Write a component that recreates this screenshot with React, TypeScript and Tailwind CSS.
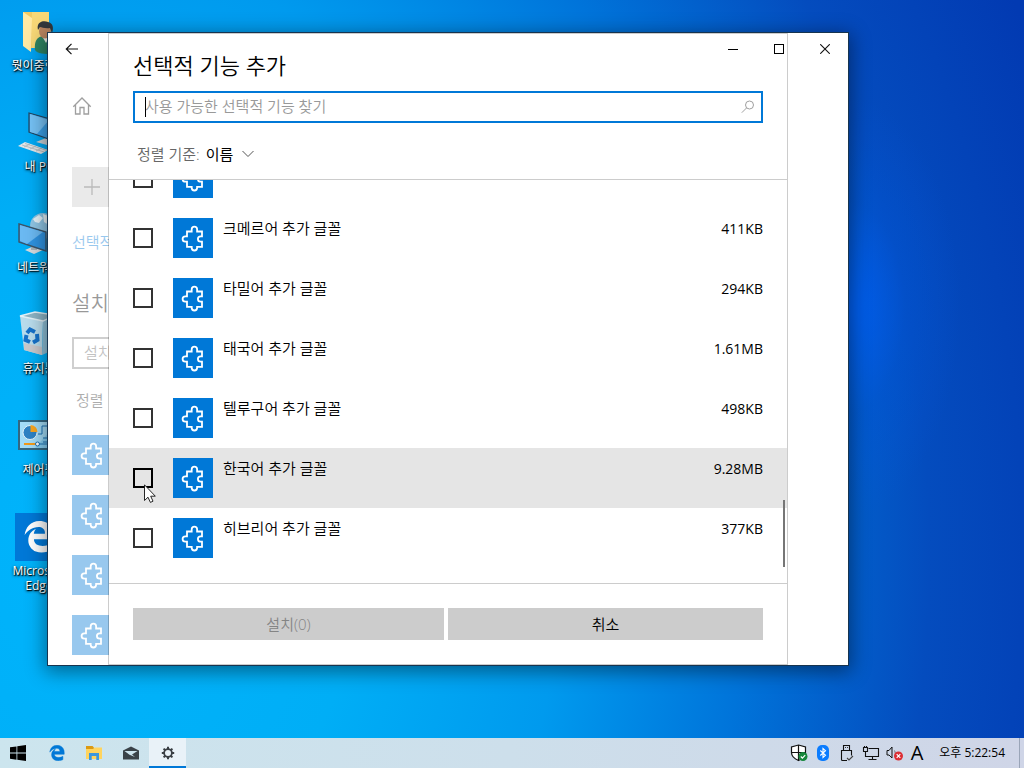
import React from 'react';

const EDGE_PATH =
  'M25.714 228.163c.111-.162.23-.323.342-.485-.021.162-.045.323-.065.485h-.277zm460.572 15.508c0-44.032-7.754-84.465-28.801-122.405C416.498 47.879 343.912 8.001 258.893 8.001 118.962 7.724 40.617 113.214 26.056 227.679c42.429-61.312 117.073-121.376 220.375-124.966 0 0 109.666 0 99.419 104.957H169.997c6.369-37.386 18.554-58.986 34.339-78.926-75.048 34.893-121.85 96.096-120.742 188.315.83 71.448 50.124 144.836 120.743 171.976 83.357 31.843 192.776 7.2 240.132-21.323V363.307c-80.864 56.494-270.871 60.925-272.255-67.572h314.073v-52.064z';

type Feature = { id: string; name: string; size: string; hovered?: boolean };

const features: Feature[] = [
  { id: 'partial', name: '', size: '' },
  { id: 'khmer', name: '크메르어 추가 글꼴', size: '411KB' },
  { id: 'tamil', name: '타밀어 추가 글꼴', size: '294KB' },
  { id: 'thai', name: '태국어 추가 글꼴', size: '1.61MB' },
  { id: 'telugu', name: '텔루구어 추가 글꼴', size: '498KB' },
  { id: 'korean', name: '한국어 추가 글꼴', size: '9.28MB', hovered: true },
  { id: 'hebrew', name: '히브리어 추가 글꼴', size: '377KB' },
];

function PuzzleTile() {
  return (
    <svg viewBox="0 0 40 40" className="size-10 shrink-0 bg-[#0078d7]" aria-hidden="true">
      <path
        d="M14 13.5H18.7V11.3a2.7 2.7 0 0 1 5.4 0V13.5H29V18.3H27.6a2.7 2.7 0 0 0 0 5.4H29V28.8H24.1V29.8a2.7 2.7 0 0 1-5.4 0V28.8H14V23.7H12.3a2.7 2.7 0 0 1 0-5.4H14Z"
        fill="none"
        stroke="#fff"
        strokeWidth="1.8"
      />
    </svg>
  );
}

function FolderIcon() {
  return (
    <svg viewBox="0 0 48 48" className="size-12" aria-hidden="true">
      <path d="M8 4H34V40H12Z" fill="#f2ca63" />
      <path d="M17 4H34V40H17Z" fill="#f8d877" />
      <path d="M8 4 17 10 16 44 8 38Z" fill="#ffe9a4" />
      <path d="M20 42C19 33 22 29 28 28L38 29V46C30 46 22 46 20 42Z" fill="#2f8463" />
      <path d="M27 28 31 35 35 28Z" fill="#e8efe9" />
      <ellipse cx="30" cy="23" rx="6" ry="7.5" fill="#b98560" />
      <path d="M23 22C21 14 28 12 33 14 38 15 39 20 37 25L35 20C30 21 27 19 25 19Z" fill="#33383c" />
    </svg>
  );
}

function ComputerIcon() {
  return (
    <svg viewBox="0 0 48 48" className="size-12" aria-hidden="true">
      <path d="M21 33 31 29 40 34 32 36Z" fill="#c9d0d5" />
      <path d="M14 4 42 12V33L14 23Z" fill="#3a9fe6" stroke="#24455f" strokeWidth="1.2" />
      <path d="M15 5 34 11 22 25 15 23Z" fill="#75c1f4" />
      <path d="M3 37 10 33 33 41 26 45Z" fill="#e3e6e8" />
      <path d="M7 36 29 43M10 34.500 32 41.500M9 38 15 35M15 40 21 37M21 42 27 39" stroke="#a9b2b8" strokeWidth=".8" />
    </svg>
  );
}

function NetworkIcon() {
  return (
    <svg viewBox="0 0 48 48" className="size-12" aria-hidden="true">
      <circle cx="28" cy="16" r="13" fill="#8fc5e4" />
      <path d="M18 9 24 5 28 8 24 13 20 12ZM28 4 36 7 34 15 29 12Z" fill="#e6f2f8" />
      <path d="M10 40 19 36 28 40 19 44Z" fill="#d5dade" />
      <path d="M16 34H22V40H16Z" fill="#a7b1b8" />
      <path d="M4 14 31 22V41L4 32Z" fill="#2f92e0" stroke="#3c5468" strokeWidth="1.4" />
      <path d="M5 15 28 22 12 34 5 31Z" fill="#6bb9f2" />
    </svg>
  );
}

function RecycleBinIcon() {
  return (
    <svg viewBox="0 0 48 48" className="size-12" aria-hidden="true">
      <path d="M5 5 28 10 27 44 9 39Z" fill="#b9dcec" />
      <path d="M28 10 40 4 36 40 27 44Z" fill="#8fc0d8" />
      <path d="M9 32 27 36V44L9 39Z" fill="#c9c8cb" />
      <path d="M5 5 20 1 40 4 28 10Z" fill="#8db4c5" stroke="#e3f1f7" strokeWidth="1.3" />
      <g fill="none" stroke="#1671c9" strokeWidth="4">
        <path d="M12 22 15 18.500 20 21" />
        <path d="M22 23 22.500 29 18 31.500" />
        <path d="M15 31 10.500 29 11.500 24" />
      </g>
    </svg>
  );
}

function ControlPanelIcon() {
  return (
    <svg viewBox="0 0 48 48" className="size-12" aria-hidden="true">
      <path d="M4 9H44V37H4Z" fill="#86cff3" stroke="#336782" strokeWidth="2" />
      <path d="M5 10H43L20 36H5Z" fill="#a3dcf7" />
      <circle cx="15" cy="20.500" r="7" fill="#2d82c4" stroke="#e5f4fb" />
      <path d="M15.500 20V13A7 7 0 0 1 22.500 20Z" fill="#f8a51f" />
      <path d="M23 22H27V14H32M28 26H34M28 30H34" stroke="#1b72b5" fill="none" />
      <path d="M9 32H21" stroke="#f19a19" strokeWidth="2" />
      <path d="M21 32H38" stroke="#1b72b5" />
      <circle cx="22.500" cy="32" r="2" fill="#fff" stroke="#1b72b5" />
    </svg>
  );
}

function EdgeTileIcon() {
  return (
    <svg viewBox="0 0 48 48" className="size-12 bg-[#0078d7]" aria-hidden="true">
      <path d={EDGE_PATH} fill="#fff" transform="translate(8 7.500) scale(.0635)" />
    </svg>
  );
}

const shortcuts = [
  { label: '뭣이중헌디', icon: <FolderIcon /> },
  { label: '내 PC', icon: <ComputerIcon /> },
  { label: '네트워크', icon: <NetworkIcon /> },
  { label: '휴지통', icon: <RecycleBinIcon /> },
  { label: '제어판', icon: <ControlPanelIcon /> },
  { label: 'Microsoft Edge', icon: <EdgeTileIcon /> },
];

function FeatureRow({ feature }: { feature: Feature }) {
  const box = feature.hovered ? 'border-black' : 'border-[#333333]';
  return (
    <li className={`flex shrink-0 items-start px-6 py-2.5 ${feature.hovered ? 'bg-[#e5e5e5]' : ''}`}>
      <div className="relative mt-2.5 mr-5 size-5 shrink-0">
        <input
          type="checkbox"
          id={feature.id}
          aria-label={feature.name || '추가 글꼴'}
          className={`block size-5 appearance-none border-2 ${box}`}
        />
        {feature.hovered && (
          <svg viewBox="0 0 12 19" className="pointer-events-none absolute top-4 left-[11px] z-10 h-[19px] w-3" aria-hidden="true">
            <path
              d="M.5 .8V16.500L4 13.200 6.400 18.400 9 17.200 6.700 12.200H11.300Z"
              fill="#fff"
              stroke="#111"
              strokeWidth=".9"
            />
          </svg>
        )}
      </div>
      <PuzzleTile />
      <label htmlFor={feature.id} className="ml-2.5 flex-1 text-[15px] leading-5">
        {feature.name}
      </label>
      <span className="text-sm leading-[22px] font-normal">{feature.size}</span>
    </li>
  );
}

function AddFeatureDialog() {
  return (
    <section
      role="dialog"
      aria-labelledby="dialog-title"
      className="absolute inset-y-0 right-15 left-15 flex flex-col border border-black/20 bg-white bg-clip-padding"
    >
      <header className="border-b border-[#cccccc] px-6 pt-[15px]">
        <h1 id="dialog-title" className="mb-2.5 text-[22px] leading-8">
          선택적 기능 추가
        </h1>
        <div className="relative flex h-8 items-center border-2 border-[#0078d7] pr-1.5 pl-2.5">
          <input
            type="text"
            aria-label="사용 가능한 선택적 기능 찾기"
            placeholder="사용 가능한 선택적 기능 찾기"
            className="min-w-0 flex-1 pb-0.5 text-[15px] outline-none placeholder:text-[#999999]"
          />
          <span className="absolute inset-y-1 left-2.5 w-px bg-black" />
          <svg viewBox="0 0 14 14" className="size-3.5" fill="none" stroke="#a0a0a0" aria-hidden="true">
            <circle cx="8.500" cy="5" r="4" />
            <path d="M5.600 7.900 .8 12.700" />
          </svg>
        </div>
        <div className="flex h-14 items-center gap-1.5 pt-1.5 pl-1 text-[15px]">
          <label htmlFor="sort" className="text-[#666666]">
            정렬 기준:
          </label>
          <span className="flex items-center gap-2">
            <select id="sort" className="appearance-none bg-transparent font-normal">
              <option>이름</option>
            </select>
            <svg viewBox="0 0 12 8" className="h-2 w-3" fill="none" stroke="#555" aria-hidden="true">
              <path d="M.5 1 6 6.500 11.500 1" />
            </svg>
          </span>
        </div>
      </header>
      <div className="relative flex min-h-0 flex-1 flex-col">
        <ul className="flex min-h-0 flex-1 flex-col justify-end overflow-hidden pb-[15px]">
          {features.map((f) => (
            <FeatureRow key={f.id} feature={f} />
          ))}
        </ul>
        <span className="absolute right-0.5 bottom-4 h-[67px] w-0.5 bg-[#767676]" />
      </div>
      <footer className="flex gap-1 border-t border-[#cccccc] p-6 text-[15px]">
        <button disabled className="h-8 flex-[311_1_0%] bg-[#cccccc] text-[#848484]">
          설치(0)
        </button>
        <button className="h-8 flex-[315_1_0%] bg-[#cccccc]">취소</button>
      </footer>
    </section>
  );
}

function SettingsWindow() {
  return (
    <div className="absolute top-8 right-[175px] bottom-[72px] left-[47px] border border-[#17344f] bg-white font-[350] shadow-[0_4px_18px_2px_rgba(0,0,0,0.42)]">
      <div className="relative z-10 flex h-8">
        <button aria-label="뒤로" className="grid w-12 place-items-center">
          <svg viewBox="0 0 14 12" className="h-3 w-3.5" fill="none" stroke="#111" strokeWidth="1.2" aria-hidden="true">
            <path d="M6.500 .8 1.300 6 6.500 11.200M1.300 6H13" />
          </svg>
        </button>
        <span className="flex-1" />
        <button aria-label="최소화" className="grid w-[46px] place-items-center">
          <span className="h-px w-2.5 bg-black" />
        </button>
        <button aria-label="최대화" className="grid w-[46px] place-items-center">
          <span className="size-2.5 border border-black" />
        </button>
        <button aria-label="닫기" className="grid w-[46px] place-items-center">
          <svg viewBox="0 0 10 10" className="size-2.5" stroke="#111" strokeWidth="1.1" aria-hidden="true">
            <path d="M.2 .2 9.800 9.800M9.800 .2 .2 9.800" />
          </svg>
        </button>
      </div>
      <div className="absolute inset-0 overflow-hidden pt-8">
        <div className="flex w-40 flex-col pl-6 opacity-40">
          <a href="#home" aria-label="홈" className="flex h-[82px] items-center">
            <svg viewBox="0 0 20 20" className="size-5" fill="none" stroke="#111" strokeWidth="1.3" aria-hidden="true">
              <path d="M1.300 10.700 10 2 18.700 10.700M3.500 9V18H8V11.500H12V18H16.500V9" />
            </svg>
          </a>
          <button aria-label="기능 추가" className="mt-5 grid size-10 place-items-center self-start bg-[#cccccc]">
            <svg viewBox="0 0 16 16" className="size-4" stroke="#555" strokeWidth="1.3" aria-hidden="true">
              <path d="M8 0V16M0 8H16" />
            </svg>
          </button>
          <a href="#history" className="flex h-[70px] items-center text-[15px] text-[#0078d7]">
            선택적
          </a>
          <h2 className="flex h-[54px] items-center text-xl">설치</h2>
          <input
            type="text"
            aria-label="설치"
            placeholder="설치"
            className="mt-1.5 h-8 border-2 border-[#888888] px-2.5 pb-0.5 text-[15px] placeholder:text-[#666666]"
          />
          <p className="flex h-[62px] items-center pl-1 text-[15px] text-[#333333]">정렬</p>
          <div className="mt-1 flex flex-col gap-5">
            <PuzzleTile />
            <PuzzleTile />
            <PuzzleTile />
            <PuzzleTile />
          </div>
        </div>
      </div>
      <AddFeatureDialog />
    </div>
  );
}

function Taskbar() {
  return (
    <footer className="flex h-[30px] items-stretch bg-linear-to-r from-[#cce5ee] via-[#cddfeb] to-[#cfd5e7]">
      <button aria-label="시작" className="mr-0.5 grid w-9 place-items-center">
        <svg viewBox="0 0 16 16" className="size-4" aria-hidden="true">
          <path d="M0 2.300 6.500 1.400V7.600H0zM7.300 1.300 16 0V7.600H7.300zM0 8.400H6.500V14.700L0 13.700zM7.300 8.400H16V16L7.300 14.800z" />
        </svg>
      </button>
      <button aria-label="Edge" className="grid w-[37px] place-items-center">
        <svg viewBox="0 0 512 512" className="size-4" aria-hidden="true">
          <path d={EDGE_PATH} fill="#0078d7" stroke="#0078d7" strokeWidth="16" />
        </svg>
      </button>
      <button aria-label="파일 탐색기" className="grid w-[37px] place-items-center">
        <svg viewBox="0 0 16 14" className="h-3.5 w-4" aria-hidden="true">
          <path d="M0 0H6.500L8 1.500V4H0Z" fill="#dc9a12" />
          <path d="M0 3H7L8.500 1.500H16V13H0Z" fill="#ffd45e" />
          <path d="M3 7H13V14H10.300V10H5.700V14H3Z" fill="#3c97dd" />
        </svg>
      </button>
      <button aria-label="메일" className="grid w-[37px] place-items-center">
        <svg viewBox="0 0 16 14" className="h-3.5 w-4" aria-hidden="true">
          <path d="M0 4.500 8 .5 16 4.500V13.500H0Z" fill="#3a4248" />
          <path d="M1.500 5H14.500L9 8.500 12 11 6.500 8.700Z" fill="#cde3ed" />
        </svg>
      </button>
      <button aria-label="설정" className="grid w-[37px] place-items-center border-b-2 border-[#0078d7] bg-[#e9f2f8] pt-0.5">
        <svg viewBox="0 0 14 14" className="size-3.5" fill="none" stroke="#3a3f44" aria-hidden="true">
          <circle cx="7" cy="7" r="3.900" strokeWidth="1.800" />
          <path
            d="M7 .8V3M7 11V13.200M.8 7H3M11 7H13.200M2.600 2.600 4.200 4.200M9.800 9.800 11.400 11.400M2.600 11.400 4.200 9.800M9.800 4.200 11.400 2.600"
            strokeWidth="2"
          />
        </svg>
      </button>
      <span className="flex-1" />
      <button aria-label="Windows 보안" className="grid w-6 place-items-center">
        <svg viewBox="0 0 18 18" className="size-[18px]" aria-hidden="true">
          <path d="M8.500 1 15.500 3V8.500C15.500 12.500 12 15 8.500 16.500 5 15 1.500 12.500 1.500 8.500V3Z" fill="#fff" stroke="#111" strokeWidth="1.200" />
          <path d="M8.500 1V16.500M1.500 8.500H15.500" stroke="#111" strokeWidth="1.200" />
          <circle cx="13" cy="12.500" r="4.500" fill="#16873c" />
          <path d="M10.800 12.500 12.400 14.100 15.200 11.200" stroke="#fff" strokeWidth="1.200" fill="none" />
        </svg>
      </button>
      <button aria-label="Bluetooth" className="grid w-6 place-items-center">
        <svg viewBox="0 0 12 16" className="h-4 w-3" aria-hidden="true">
          <rect width="12" height="16" rx="5" fill="#0a7cff" />
          <path d="M3.300 5.500 8.500 10.300 6 12.500V3.500L8.500 5.700 3.300 10.500" fill="none" stroke="#fff" strokeWidth="1.100" />
        </svg>
      </button>
      <button aria-label="하드웨어 안전하게 제거" className="grid w-6 place-items-center">
        <svg viewBox="0 0 14 18" className="h-[18px] w-3.5" fill="none" stroke="#111" strokeWidth="1.100" aria-hidden="true">
          <path d="M3.500 6V1.500H9.500V6M7 16.500H2.500Q1.500 16.500 1.500 15.500V6.500H11.500V11.500M5 3.500H5.800M7.200 3.500H8" />
          <path d="M7 14 9 16 13 12" stroke="#444" />
        </svg>
      </button>
      <button aria-label="네트워크" className="grid w-6 place-items-center">
        <svg viewBox="0 0 18 16" className="h-4 w-[18px]" fill="none" stroke="#111" strokeWidth="1.100" aria-hidden="true">
          <path d="M6.500 3.500H16.500V11.500H3.500V7M10.500 11.500V14.500M6.500 14.500H14.500" />
          <path d="M1.500 2.500H5.500V6.500H1.500ZM2.500 1V2.500M4.500 1V2.500" />
        </svg>
      </button>
      <button aria-label="음소거됨" className="grid w-6 place-items-center">
        <svg viewBox="0 0 18 16" className="h-4 w-[18px]" aria-hidden="true">
          <path d="M1 5.500H3L6 2V13L3 10H1Z" fill="none" stroke="#111" />
          <path d="M8.500 5.500Q9.500 7 9 8.500" fill="none" stroke="#777" />
          <circle cx="12.500" cy="11" r="4.500" fill="#dc2f35" />
          <path d="M10.700 9.200 14.300 12.800M14.300 9.200 10.700 12.800" stroke="#fff" strokeWidth="1.200" />
        </svg>
      </button>
      <button className="w-5 text-xl">A</button>
      <time className="flex items-center pr-3.5 pl-3 text-xs">오후 5:22:54</time>
      <button aria-label="바탕 화면 보기" className="w-[5px] border-l border-[#9aa5b8]" />
    </footer>
  );
}

export default function App() {
  return (
    <div className="flex h-screen min-h-[600px] flex-col overflow-hidden bg-[radial-gradient(ellipse_110px_210px_at_83%_40%,rgba(0,96,250,0.75)_0%,rgba(0,88,225,0.3)_50%,rgba(0,72,200,0)_100%),radial-gradient(ellipse_90%_150%_at_8%_72%,#00b4fc_0%,#00aef6_30%,#009aee_52%,#0074da_72%,#044cbe_92%,#023ab2_112%)] font-['Open_Sans','Noto_Sans_CJK_KR',sans-serif] text-black">
      <main className="relative flex-1">
        <nav aria-label="바탕 화면" className="flex w-[78px] flex-col pt-2">
          {shortcuts.map((s) => (
            <a key={s.label} href="#desktop" className="flex h-[101px] flex-col items-center gap-0.5">
              {s.icon}
              <span className="text-center text-xs leading-[15px] text-white [text-shadow:1px_1px_1px_#000,0_1px_3px_#000]">
                {s.label}
              </span>
            </a>
          ))}
        </nav>
        <SettingsWindow />
      </main>
      <Taskbar />
    </div>
  );
}
